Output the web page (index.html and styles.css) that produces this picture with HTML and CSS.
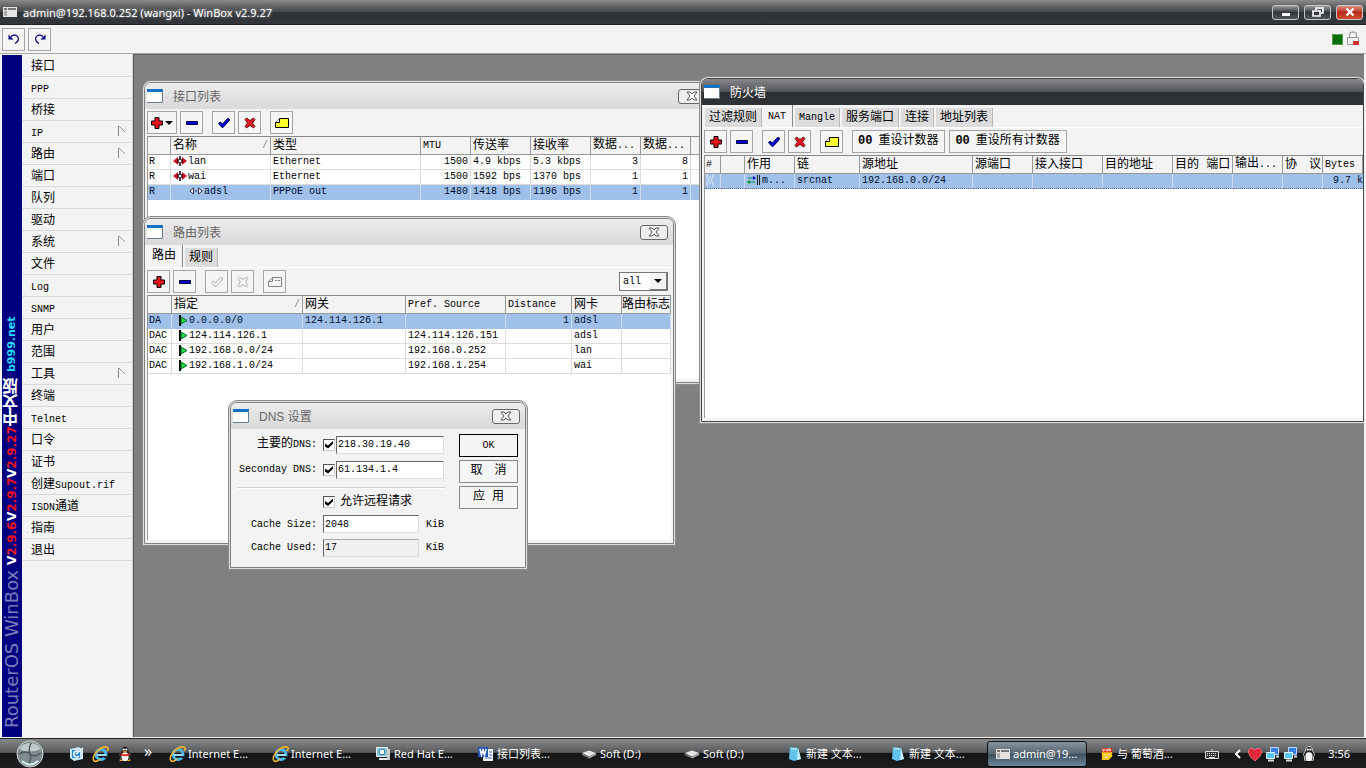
FILE: index.html
```html
<!DOCTYPE html>
<html lang="zh-CN">
<head>
<meta charset="utf-8">
<title>admin@192.168.0.252 (wangxi) - WinBox v2.9.27</title>
<link rel="stylesheet" href="styles.css">
</head>
<body>
<svg class="defs" aria-hidden="true">
  <symbol id="plus" viewBox="0 0 12 12"><path d="M4 .5h4v3.5h3.5v4H8v3.500H4V8H.5V4H4z" fill="#e8141c" stroke="#000"/></symbol>
  <symbol id="minus" viewBox="0 0 12 12"><path d="M.5 4.500h11v3H.5z" fill="#0000d8" stroke="#00003c"/></symbol>
  <symbol id="check" viewBox="0 0 12 12"><path d="M.5 6.500 2 5l2.500 2L9.500 1.500 11.500 2 11 4 5 10.500H4z" fill="#0000e0" stroke="#000040"/></symbol>
  <symbol id="cross" viewBox="0 0 12 12"><path d="M1 2.500 2.500 1 6 3.500 9.500 1 11 2.500 8.500 6 11 9.500 9.500 11 6 8.500 2.500 11 1 9.500 3.500 6z" fill="#f01820" stroke="#300" stroke-width=".8"/></symbol>
  <symbol id="note" viewBox="0 0 14 12"><path d="M4.500 1.500h9v9H.5V5.500z" fill="#ffff30" stroke="#000"/><path d="M4.500 1.500v4h-4" fill="#fff" stroke="#000"/></symbol>
  <symbol id="checkoff" viewBox="0 0 12 12"><path d="M.5 6.500 2 5l2.500 2L9.500 1.500 11.500 2 11 4 5 10.500H4z" fill="#f8f8f8" stroke="#aaa"/></symbol>
  <symbol id="crossoff" viewBox="0 0 12 12"><path d="M1 2.500 2.500 1 6 3.500 9.500 1 11 2.500 8.500 6 11 9.500 9.500 11 6 8.500 2.500 11 1 9.500 3.500 6z" fill="#f8f8f8" stroke="#aaa"/></symbol>
  <symbol id="noteoff" viewBox="0 0 14 12"><path d="M4.500 1.500h9v9H.5V5.500zM4.500 1.500v4h-4M7 4.500h2M10 4.500h2" fill="none" stroke="#808080"/></symbol>
  <symbol id="wclose" viewBox="0 0 12 10"><path d="M1 1h3l2 2 2-2h3L8 5l3 4H8L6 7 4 9H1l3-4z" fill="#fff" stroke="#555"/></symbol>
  <symbol id="appwin" viewBox="0 0 16 14"><path d="M0 0h16v14H0z" fill="#fff"/><path d="M0 0h16v3H0z" fill="#1470c0"/><path d="M15.500 2v11.500H0" fill="none" stroke="#6a7c90"/></symbol>
  <symbol id="nic" viewBox="0 0 14 10"><path d="M0 5l5-4v8zM14 5 9 1v8z" fill="#d01028"/><path d="M5 3v4M9 3v4" stroke="#300" stroke-width="1.500"/><path d="M7 0v4M7 6v4" stroke="#000" stroke-width="1.500"/></symbol>
  <symbol id="ppp" viewBox="0 0 14 10"><path d="M.8 5 4.500 2v6zM13.200 5 9.500 2v6z" fill="#fff" stroke="#335"/><path d="M6 5h2" stroke="#335"/></symbol>
  <symbol id="flag" viewBox="0 0 9 11"><path d="M1 0v11" stroke="#000" stroke-width="2"/><path d="M2 2l6 3.500L2 9z" fill="#20e040" stroke="#063"/></symbol>
  <symbol id="ie" viewBox="0 0 18 18"><circle cx="9" cy="9.500" r="5" fill="none" stroke="#4ab8f0" stroke-width="3"/><path d="M5 10h9" stroke="#9cdcff" stroke-width="2"/><path d="M12 13h5v-2h-5z" fill="#202428"/><path d="M2 16C-1 11 8 1 15 2c2 1 1 3 0 4M2 16c2 1 5-1 6-2" fill="none" stroke="#f0b428" stroke-width="1.600"/></symbol>
  <symbol id="qq" viewBox="0 0 16 18"><path d="M3 12C0 9 4 7 4 5c0-6 8-6 8 0 0 2 4 4 1 7v4H3z" fill="#15171a" stroke="#777" stroke-width=".5"/><ellipse cx="8" cy="12" rx="4" ry="5" fill="#fff"/><path d="M3 8q5 3 10 0v2q-5 3-10 0z" fill="#e82020"/><circle cx="6.500" cy="4" r="1.300" fill="#fff"/><circle cx="9.500" cy="4" r="1.300" fill="#fff"/><path d="M5 6h6l-3 2zM2 15l5 2H2zM14 15l-5 2h5z" fill="#f8a818"/></symbol>
  <symbol id="disk" viewBox="0 0 18 12"><path d="M1 5l8-3 8 3-8 4z" fill="#e4e4e4"/><path d="M1 5l8 4v2L1 7z" fill="#777"/><path d="M17 5 9 9v2l8-4z" fill="#aaa"/></symbol>
  <symbol id="pad" viewBox="0 0 14 16"><path d="M2 1l8 1 3 11-7 2-5-2z" fill="#62c4ee"/><path d="M10 2l3 11-4 1z" fill="#c8eefc"/><path d="M3 3h6" stroke="#d8f6ff"/></symbol>
  <symbol id="net" viewBox="0 0 16 16"><path d="M5.500 1.500h8v7h-8z" fill="#3a80e0" stroke="#bcd8ff"/><path d="M1.500 6.500h8v6h-8z" fill="#54c8ff" stroke="#e6f5ff"/><path d="M3 14.500h6M11 10.500h3" stroke="#ddd" stroke-width="2"/></symbol>
  <symbol id="wbx" viewBox="0 0 14 10"><path d="M0 0h14v10H0z" fill="#e4e4e4"/><path d="M1 1h3v2H1zM5 1h8v2H5z" fill="#777"/><path d="M1 4h3v5H1z" fill="#aaa"/></symbol>
</svg>

<header class="titlebar">
  <svg class="i14"><use href="#wbx"/></svg>
  <h1>admin@192.168.0.252 (wangxi) - WinBox v2.9.27</h1>
  <div class="winbtns">
    <button aria-label="最小化"><svg viewBox="0 0 12 10"><path d="M2 6h8v3H2z" fill="#fff"/></svg></button>
    <button aria-label="还原"><svg viewBox="0 0 12 10"><path d="M4 3V1h7v5H9M1 4h7v5H1z" fill="none" stroke="#fff" stroke-width="1.600"/></svg></button>
    <button class="red" aria-label="关闭"><svg viewBox="0 0 12 10"><path d="M2.500 1.500l7 7M9.500 1.500l-7 7" stroke="#fff" stroke-width="2.400"/></svg></button>
  </div>
</header>

<div class="mainbar">
  <button class="tb" aria-label="撤销"><svg class="i12" viewBox="0 0 12 12"><path d="M3 3.500C9-1 14 7 7 10.500" fill="none" stroke="#000080" stroke-width="1.200"/><path d="M.5 1.500v5h5z" fill="#000080"/></svg></button>
  <button class="tb" aria-label="重做"><svg class="i12" viewBox="0 0 12 12"><path d="M9 3.500C3-1-2 7 5 10.500" fill="none" stroke="#000080" stroke-width="1.200"/><path d="M11.500 1.500v5h-5z" fill="#000080"/></svg></button>
  <span class="led"></span>
  <svg class="lock" viewBox="0 0 14 16"><path d="M3.500 7V4c0-4 7-4 7 0v3" fill="none" stroke="#aaa" stroke-width="1.500"/><path d="M1.500 6.500h11v7h-11z" fill="#eee" stroke="#999"/><path d="M7 10h6v4H7z" fill="#d03030"/></svg>
</div>

<div class="main">
  <div class="strip"><div class="brand"><span class="b1">RouterOS WinBox</span><span class="b2">V<i>2.9.6</i></span><span class="b2">V<i>2.9.7</i></span><span class="b2">V<i>2.9.27</i></span><span class="b3">中文版</span><span class="b4">b999.net</span></div></div>
  <nav class="menu">
    <a href="#">接口</a><a href="#"><b>PPP</b></a><a href="#">桥接</a><a href="#" class="sub"><b>IP</b></a><a href="#" class="sub">路由</a><a href="#">端口</a><a href="#">队列</a><a href="#">驱动</a><a href="#" class="sub">系统</a><a href="#">文件</a><a href="#"><b>Log</b></a><a href="#"><b>SNMP</b></a><a href="#">用户</a><a href="#">范围</a><a href="#" class="sub">工具</a><a href="#">终端</a><a href="#"><b>Telnet</b></a><a href="#">口令</a><a href="#">证书</a><a href="#">创建<b>Supout.rif</b></a><a href="#"><b>ISDN</b>通道</a><a href="#">指南</a><a href="#">退出</a>
  </nav>

  <main class="desk">
    <section class="win w1">
      <header class="wt"><svg class="i16"><use href="#appwin"/></svg><h2>接口列表</h2><button class="x" aria-label="关闭"><svg><use href="#wclose"/></svg></button></header>
      <div class="bar">
        <button class="tb wide" aria-label="添加"><svg class="i12"><use href="#plus"/></svg><span class="dn"></span></button>
        <button class="tb" aria-label="删除"><svg class="i12"><use href="#minus"/></svg></button>
        <button class="tb gap" aria-label="启用"><svg class="i12"><use href="#check"/></svg></button>
        <button class="tb" aria-label="禁用"><svg class="i12"><use href="#cross"/></svg></button>
        <button class="tb gap" aria-label="注释"><svg class="i14"><use href="#note"/></svg></button>
      </div>
      <div class="list"><table>
        <colgroup><col class="c23"><col class="c100"><col class="c150"><col class="c50"><col class="c60"><col class="c60"><col class="c50"><col class="c50"><col></colgroup>
        <thead><tr><th></th><th class="sort">名称</th><th>类型</th><th><b>MTU</b></th><th>传送率</th><th>接收率</th><th>数据<b>...</b></th><th>数据<b>...</b></th><th></th></tr></thead>
        <tbody>
          <tr><td>R</td><td><svg class="nic"><use href="#nic"/></svg>lan</td><td>Ethernet</td><td class="r">1500</td><td>4.9 kbps</td><td>5.3 kbps</td><td class="r">3</td><td class="r">8</td><td></td></tr>
          <tr><td>R</td><td><svg class="nic"><use href="#nic"/></svg>wai</td><td>Ethernet</td><td class="r">1500</td><td>1592 bps</td><td>1370 bps</td><td class="r">1</td><td class="r">1</td><td></td></tr>
          <tr class="sel"><td>R</td><td class="child"><svg class="nic"><use href="#ppp"/></svg>adsl</td><td>PPPoE out</td><td class="r">1480</td><td>1418 bps</td><td>1196 bps</td><td class="r">1</td><td class="r">1</td><td></td></tr>
        </tbody>
      </table></div>
    </section>

    <section class="win w2">
      <header class="wt"><svg class="i16"><use href="#appwin"/></svg><h2>路由列表</h2><button class="x" aria-label="关闭"><svg><use href="#wclose"/></svg></button></header>
      <div class="tabs"><button class="on">路由</button><button>规则</button></div>
      <div class="bar">
        <button class="tb" aria-label="添加"><svg class="i12"><use href="#plus"/></svg></button>
        <button class="tb" aria-label="删除"><svg class="i12"><use href="#minus"/></svg></button>
        <button class="tb gap" disabled aria-label="启用"><svg class="i12"><use href="#checkoff"/></svg></button>
        <button class="tb" disabled aria-label="禁用"><svg class="i12"><use href="#crossoff"/></svg></button>
        <button class="tb gap" disabled aria-label="注释"><svg class="i14"><use href="#noteoff"/></svg></button>
        <label class="pick"><select aria-label="筛选"><option>all</option></select><span class="arrow"><span class="dn"></span></span></label>
      </div>
      <div class="list"><table>
        <colgroup><col class="c24"><col class="c131"><col class="c103"><col class="c100"><col class="c66"><col class="c50"><col></colgroup>
        <thead><tr><th></th><th class="sort">指定</th><th>网关</th><th><b>Pref. Source</b></th><th><b>Distance</b></th><th>网卡</th><th class="tight">路由标志</th></tr></thead>
        <tbody>
          <tr class="sel"><td>DA</td><td class="dst"><svg class="flag"><use href="#flag"/></svg>0.0.0.0/0</td><td>124.114.126.1</td><td></td><td class="r">1</td><td>adsl</td><td></td></tr>
          <tr><td>DAC</td><td class="dst"><svg class="flag"><use href="#flag"/></svg>124.114.126.1</td><td></td><td>124.114.126.151</td><td></td><td>adsl</td><td></td></tr>
          <tr><td>DAC</td><td class="dst"><svg class="flag"><use href="#flag"/></svg>192.168.0.0/24</td><td></td><td>192.168.0.252</td><td></td><td>lan</td><td></td></tr>
          <tr><td>DAC</td><td class="dst"><svg class="flag"><use href="#flag"/></svg>192.168.1.0/24</td><td></td><td>192.168.1.254</td><td></td><td>wai</td><td></td></tr>
        </tbody>
      </table></div>
    </section>

    <section class="win w3">
      <header class="wt"><svg class="i16"><use href="#appwin"/></svg><h2>DNS 设置</h2><button class="x" aria-label="关闭"><svg><use href="#wclose"/></svg></button></header>
      <form class="dns">
        <div class="fields">
          <div class="row"><label for="d1">主要的<b>DNS:</b></label><input type="checkbox" checked aria-label="启用主要的DNS"><input class="tx" id="d1" value="218.30.19.40"></div>
          <div class="row"><label for="d2"><b>Seconday DNS:</b></label><input type="checkbox" checked aria-label="启用 Seconday DNS"><input class="tx" id="d2" value="61.134.1.4"></div>
          <hr>
          <div class="row low"><span class="lead"></span><input type="checkbox" id="rem" checked><label class="after" for="rem">允许远程请求</label></div>
          <div class="row low"><label for="cs"><b>Cache Size:</b></label><input class="tx short" id="cs" value="2048"><b>KiB</b></div>
          <div class="row"><label for="cu"><b>Cache Used:</b></label><input class="tx short ro" id="cu" value="17" readonly><b>KiB</b></div>
        </div>
        <div class="acts"><button type="button" class="def"><b>OK</b></button><button type="button">取　消</button><button type="button">应 用</button></div>
      </form>
    </section>

    <section class="win w4">
      <header class="wt dark"><svg class="i16"><use href="#appwin"/></svg><h2>防火墙</h2></header>
      <div class="tabs"><button>过滤规则</button><button class="on"><b>NAT</b></button><button><b>Mangle</b></button><button>服务端口</button><button>连接</button><button>地址列表</button></div>
      <div class="bar">
        <button class="tb" aria-label="添加"><svg class="i12"><use href="#plus"/></svg></button>
        <button class="tb" aria-label="删除"><svg class="i12"><use href="#minus"/></svg></button>
        <button class="tb gap" aria-label="启用"><svg class="i12"><use href="#check"/></svg></button>
        <button class="tb" aria-label="禁用"><svg class="i12"><use href="#cross"/></svg></button>
        <button class="tb gap" aria-label="注释"><svg class="i14"><use href="#note"/></svg></button>
        <button class="tb txt gap"><strong>00</strong>重设计数器</button>
        <button class="tb txt"><strong>00</strong>重设所有计数器</button>
      </div>
      <div class="list"><table>
        <colgroup><col class="c16"><col class="c24"><col class="c50"><col class="c65"><col class="c113"><col class="c60"><col class="c70"><col class="c70"><col class="c60"><col class="c50"><col class="c40"><col></colgroup>
        <thead><tr><th><b>#</b></th><th></th><th>作用</th><th>链</th><th>源地址</th><th>源端口</th><th>接入接口</th><th>目的地址</th><th>目的 端口</th><th>输出<b>...</b></th><th>协　议</th><th><b>Bytes</b></th></tr></thead>
        <tbody><tr class="sel foc"><td><svg class="hand" viewBox="0 0 8 12"><path d="M1 0v3l2 3-2 3v3M7 0v3L5 6l2 3v3M3 3h2M3 9h2" fill="none" stroke="#e4ecf8"/></svg></td><td></td><td><svg class="nic" viewBox="0 0 14 10"><path d="M1 3h7M1 7h7" stroke="#086"/><path d="M6 1l3 2-3 2z" fill="#00c"/><path d="M3 5 0 7l3 2z" fill="#090"/><path d="M10.500 0v10M12.500 0v10" stroke="#223"/></svg>m...</td><td>srcnat</td><td>192.168.0.0/24</td><td></td><td></td><td></td><td></td><td></td><td></td><td class="last">9.7 k</td></tr></tbody>
      </table></div>
    </section>
  </main>
</div>

<footer class="task">
  <button class="orb" aria-label="开始"><svg viewBox="0 0 28 28"><circle cx="14" cy="14" r="13" fill="#7f8b8f" stroke="#cdd5d7"/><path d="M3 9a13 13 0 0 1 22 0q-11 5-22 0z" fill="#c0cacc"/><path d="M3 14q6-4 11 0t11-1M15 3q-3 6-1 11t-2 11" fill="none" stroke="#4b585c" stroke-width="1.500"/><path d="M6 21q8 7 16 0" fill="none" stroke="#d4f0f2" stroke-width="2"/></svg></button>
  <div class="quick">
    <svg class="i16" viewBox="0 0 16 16"><path d="M1 3l9-2 4 3v9l-9 2-4-3z" fill="#c8e8fa"/><path d="M3 4h8v8H3z" fill="#2a88d0"/><path d="M10 6a3 3 0 1 0 0 4M7 8l7-6" fill="none" stroke="#fff" stroke-width="1.500"/></svg>
    <svg class="i18"><use href="#ie"/></svg>
    <svg class="i16"><use href="#qq"/></svg>
    <span class="more">»</span>
  </div>
  <div class="apps">
    <button class="wideicon"><svg class="i18"><use href="#ie"/></svg>Internet E...</button>
    <button class="wideicon"><svg class="i18"><use href="#ie"/></svg>Internet E...</button>
    <button><svg class="i16" viewBox="0 0 16 16"><path d="M1.500 1.500h11v9h-11z" fill="#8fc8e0" stroke="#e4f2f6"/><circle cx="7" cy="6" r="3" fill="#fff" stroke="#167a9a"/><path d="M4 13h8" stroke="#eee" stroke-width="2"/><path d="M13.500 3v11" stroke="#ccc" stroke-width="3"/></svg>Red Hat E...</button>
    <button><svg class="i16" viewBox="0 0 16 16"><path d="M5 3h10v12H5z" fill="#eef4ff"/><path d="M7 12h7M11 6h3M11 9h3" stroke="#4870c0"/><path d="M0 1h10v10H0z" fill="#2458b0"/><path d="M2 3l1.500 6L5 4l1.500 5L8 3" fill="none" stroke="#fff" stroke-width="1.500"/></svg>接口列表...</button>
    <button><svg class="i16"><use href="#disk"/></svg>Soft (D:)</button>
    <button><svg class="i16"><use href="#disk"/></svg>Soft (D:)</button>
    <button><svg class="i16"><use href="#pad"/></svg>新建 文本...</button>
    <button><svg class="i16"><use href="#pad"/></svg>新建 文本...</button>
    <button class="act"><svg class="i14"><use href="#wbx"/></svg>admin@19...</button>
    <button><svg class="i14" viewBox="0 0 14 14"><path d="M1 1h12v9l-4 4H1z" fill="#f8c820"/><path d="M1 0h12v5H1z" fill="#d83010"/><path d="M2 1l1 3 1-3M6 1v3M8 4V1h3v2H8M3 8h2M8 8h2M4 11h4" fill="none" stroke="#fff"/></svg>与 葡萄酒...</button>
  </div>
  <div class="tray">
    <svg class="kbd" viewBox="0 0 14 10"><path d="M.5 2.500h13v7H.5z" fill="#333" stroke="#ddd"/><path d="M2 4.500h10M2 6.500h10" stroke="#eee" stroke-dasharray="1 1"/><path d="M4 8.500h6" stroke="#eee"/><path d="M7 0v2" stroke="#ddd"/></svg>
    <svg class="chev" viewBox="0 0 8 10"><path d="M6 1 2 5l4 4" fill="none" stroke="#fff" stroke-width="2"/></svg>
    <svg class="i16" viewBox="0 0 16 16"><path d="M8 15C-4 6 3-1 8 4c5-5 12 2 0 11z" fill="#e02838" stroke="#ff9aa0" stroke-width=".6"/></svg>
    <svg class="i16"><use href="#net"/></svg>
    <svg class="i16"><use href="#net"/></svg>
    <svg class="i16" viewBox="0 0 16 18"><path d="M3 12C0 9 4 7 4 5c0-6 8-6 8 0 0 2 4 4 1 7v4H3z" fill="#222" stroke="#ddd"/><ellipse cx="8" cy="12" rx="4" ry="5" fill="#f4f4f4"/><circle cx="6.500" cy="4" r="1.300" fill="#fff"/><circle cx="9.500" cy="4" r="1.300" fill="#fff"/><path d="M5 7h6l-3 1z" fill="#ccc"/></svg>
    <time>3:56</time>
  </div>
</footer>
</body>
</html>
```
FILE: styles.css
```css
* { box-sizing: border-box; }
body {
  margin: 0;
  height: 100vh;
  display: flex;
  flex-direction: column;
  overflow: hidden;
  background: #f3f3f3;
  color: #000;
  font: 12px/15px "Liberation Mono", "Noto Sans CJK SC", monospace;
}
b { font-weight: 400; font-size: 10px; }
h1, h2 { margin: 0; font-weight: 400; }
button, input, select {
  margin: 0;
  padding: 0;
  font: inherit;
  color: inherit;
  border-radius: 0;
}
svg { flex: none; display: block; }
.defs { position: absolute; width: 0; height: 0; }
.i12 { width: 12px; height: 12px; }
.i14 { width: 14px; height: 12px; }
.i16 { width: 16px; height: 16px; }
.i18 { width: 18px; height: 18px; }

/* application title */
.titlebar {
  flex: none;
  height: 25px;
  display: flex;
  align-items: center;
  gap: 5px;
  padding: 0 3px;
  background: linear-gradient(#8a8a8a 0, #5c5e60 30%, #44474a 50%, #2f3236 52%, #33363a 100%);
  border-bottom: 1px solid #222;
}
.titlebar h1 {
  flex: 1;
  color: #fff;
  font: 11px/16px "Noto Sans", sans-serif;
  padding: 2px 0 0 1px;
  text-shadow: 0 0 3px #bbb;
}
.winbtns { display: flex; gap: 5px; }
.winbtns button {
  width: 27px;
  height: 15px;
  display: grid;
  place-items: center;
  border: 1px solid #c4c8cc;
  border-radius: 3px;
  background: linear-gradient(#9a9ea2, #34383c 50%, #50565c);
}
.winbtns .red { background: linear-gradient(#e09080, #b82c18 50%, #d05030); }
.winbtns svg { width: 12px; height: 10px; }

/* main toolbar */
.mainbar {
  flex: none;
  height: 29px;
  display: flex;
  align-items: center;
  gap: 3px;
  padding: 0 6px 0 2px;
  border-bottom: 1px solid #a8a8a8;
}
.tb {
  flex: none;
  width: 23px;
  height: 23px;
  display: flex;
  align-items: center;
  justify-content: center;
  background: #f5f5f5;
  border: 1px solid #a4a4a4;
}
.led { width: 11px; height: 11px; margin-left: auto; background: #087008; border: 1px solid #5a9a50; }
.lock { width: 14px; height: 16px; }

.main { flex: 1; min-height: 0; display: flex; padding: 1px 2px 0; border-bottom: 1px solid #f3f3f3; }
.strip { width: 20px; background: #000080; overflow: hidden; }
.brand {
  width: 20px;
  height: 100%;
  display: flex;
  align-items: center;
  writing-mode: vertical-rl;
  transform: rotate(180deg);
  padding-top: 9px;
  white-space: nowrap;
  color: #fff;
  font: bold 12px/20px "DejaVu Sans", "Noto Sans CJK SC", sans-serif;
}
.brand i { font-style: normal; color: #f01020; }
.b1 { font-weight: 400; font-size: 18px; color: #7c7cb8; margin-bottom: 5px; }
.b3 { font-size: 16px; }
.b4 { font-size: 11px; color: #28d8f8; margin-top: 6px; }

.menu { width: 111px; display: flex; flex-direction: column; border-right: 1px solid #d0d0d0; }
.menu a {
  position: relative;
  height: 22px;
  margin-right: 1px;
  padding-left: 9px;
  line-height: 25px;
  color: #000;
  text-decoration: none;
  border-bottom: 1px solid #d8d8d8;
  white-space: nowrap;
}
.sub::after {
  content: "";
  position: absolute;
  right: 6px;
  top: 5px;
  width: 6px;
  height: 10px;
  background: linear-gradient(45deg, transparent 46%, #999 47%, #999 56%, transparent 57%) 0 0 / 6px 6px no-repeat;
  border-left: 1px solid #888;
}

/* desktop with free windows */
.desk {
  position: relative;
  flex: 1;
  min-width: 0;
  margin-top: -1px;
  overflow: hidden;
  background: #808080;
  border-top: 1px solid #5c5c5c;
  border-left: 1px solid #5c5c5c;
}
.win {
  position: absolute;
  display: flex;
  flex-direction: column;
  background: #f3f3f3;
  border: 1px solid #808080;
  border-radius: 7px 7px 0 0;
  box-shadow: 0 0 0 1px #dcdcdc, 0 0 0 2px #8a8a8a;
  padding: 0 2px 3px;
}
.w1 { left: 10px; top: 27px; width: 600px; height: 301px; }
.w2 { left: 10px; top: 163px; width: 530px; height: 326px; }
.w3 { left: 96px; top: 347px; width: 296px; padding-bottom: 0; }
.w4 { left: 567px; top: 23px; right: 0; height: 344px; padding-right: 0; border-color: #404448; }
.wt {
  flex: none;
  height: 26px;
  display: flex;
  align-items: center;
  gap: 10px;
  margin: 0 -2px;
  padding: 0 5px 0 2px;
  background: linear-gradient(#eee, #e2e2e2 45%, #dadada);
  border-radius: 6px 6px 0 0;
  color: #666;
}
.wt .i16 { height: 14px; }
.wt h2 { flex: 1; padding-top: 1px; font: 12px/16px "Liberation Sans", "Noto Sans CJK SC", sans-serif; }
.wt.dark {
  margin-right: 0;
  color: #fff;
  background: linear-gradient(#85878a, #54575a 48%, #2e3134 50%, #303336);
}
.x {
  width: 28px;
  height: 15px;
  display: grid;
  place-items: center;
  background: #eee;
  border: 1px solid #666;
  border-radius: 3px;
}
.x svg { width: 12px; height: 10px; }
.w1 .x { margin-right: 32px; }

.bar { flex: none; height: 27px; display: flex; align-items: center; gap: 3px; }
.bar .gap { margin-left: 6px; }
.tb.wide { width: 30px; gap: 2px; }
.dn { border: 4px solid transparent; border-top-color: #000; border-bottom: 0; }
.tb.txt { width: auto; padding: 0 6px 0 5px; gap: 6px; margin-right: 1px; }
.tb strong { font-size: 12px; }

.tabs {
  flex: none;
  height: 23px;
  display: flex;
  align-items: flex-end;
  gap: 2px;
  padding: 0 0 0 1px;
  border-bottom: 1px solid #fff;
}
.tabs button {
  height: 19px;
  padding: 0 4px;
  line-height: 18px;
  border: 0;
  border-right: 1px solid #b8b8b8;
  background: #dcdcdc;
}
.tabs .on { height: 22px; padding: 0 6px 0 4px; background: #f3f3f3; border-right-color: #888; }

.pick { margin-left: auto; margin-right: 3px; width: 49px; height: 19px; display: flex; border: 1px solid #777; background: #fff; }
.pick select { appearance: none; flex: 1; min-width: 0; padding-left: 3px; border: 0; background: #fff; font-size: 10px; }
.arrow { width: 17px; display: grid; place-items: center; background: #f3f3f3; border-right: 1px solid #777; border-bottom: 1px solid #777; }

.list { flex: 1; min-height: 0; overflow: hidden; background: #fff; border-top: 1px solid #888; border-left: 1px solid #999; }
table { width: 100%; table-layout: fixed; border-collapse: separate; border-spacing: 0; }
th, td { padding: 0 0 0 2px; overflow: hidden; white-space: nowrap; text-align: left; font-weight: 400; }
th { height: 17px; line-height: 16px; background: #f3f3f3; border-right: 1px solid #999; border-bottom: 1px solid #999; }
td { height: 15px; line-height: 14px; font-size: 10px; border-right: 1px solid #dcdcdc; border-bottom: 1px solid #dcdcdc; }
th:first-child, td:first-child { padding-left: 1px; }
th.tight { padding-left: 0; }
.sort::after { content: "/"; float: right; margin-right: 2px; font-size: 10px; color: #888; }
.r { text-align: right; padding-right: 2px; }
.sel td { background: #9fc0e8; border-bottom-color: #9fc0e8; border-right-color: #cfdff3; color: #001030; }
.foc td { border-bottom: 1px dotted #667; }
td.last { padding-left: 10px; border-right: 0; }
td svg { display: inline-block; vertical-align: middle; margin-right: 1px; }
.nic { width: 14px; height: 10px; }
.flag { width: 9px; height: 11px; }
.hand { width: 8px; height: 12px; }
td.child { padding-left: 18px; }
td.dst { padding-left: 7px; }
.c16 { width: 16px; } .c23 { width: 23px; } .c24 { width: 24px; } .c40 { width: 40px; } .c50 { width: 50px; }
.c60 { width: 60px; } .c65 { width: 65px; } .c66 { width: 66px; } .c70 { width: 70px; }
.c100 { width: 100px; } .c103 { width: 103px; } .c113 { width: 113px; } .c131 { width: 131px; } .c150 { width: 150px; }

/* DNS dialog */
.dns { display: flex; justify-content: space-between; padding: 3px 5px 7px 4px; }
.fields { width: 208px; }
.row { height: 25px; display: flex; align-items: center; white-space: nowrap; }
.row.low { height: 22px; }
.row label:first-child, .lead { width: 80px; margin-right: 6px; text-align: right; }
.row label:first-child { display: flex; justify-content: flex-end; align-items: center; }
.row .after { padding-left: 5px; }
.row input[type="checkbox"] {
  appearance: none;
  flex: none;
  width: 12px;
  height: 12px;
  display: grid;
  place-items: center;
  background: #fff;
  border: 1px solid #ccc;
  border-top-color: #555;
  border-left-color: #555;
}
.row input[type="checkbox"]:checked::after {
  content: "";
  width: 8px;
  height: 8px;
  background: #000;
  clip-path: polygon(0 38%, 38% 62%, 100% 5%, 100% 42%, 38% 100%, 0 75%);
}
.tx {
  width: 108px;
  height: 18px;
  margin-left: 1px;
  padding-left: 1px;
  font-size: 10px;
  background: #fff;
  border: 1px solid #ddd;
  border-top-color: #666;
  border-left-color: #666;
}
.row .short { width: 96px; margin: 0 7px 0 0; }
.tx.ro { background: #f0f0f0; border-top-color: #aaa; }
hr { margin: 5px 0 2px; border: 0; border-top: 1px solid #d0d0d0; border-bottom: 1px solid #fff; }
.acts { display: flex; flex-direction: column; gap: 3px; padding-top: 2px; }
.acts button { width: 59px; height: 23px; background: #f5f5f5; border: 1px solid #888; }
.acts .def { border-color: #000; }

/* taskbar */
.task {
  flex: none;
  height: 30px;
  display: flex;
  align-items: center;
  color: #fff;
  font: 11px/16px "Noto Sans", "Noto Sans CJK SC", sans-serif;
  border-top: 1px solid #222;
  background: linear-gradient(#868889, #57595a 46%, #141617 50%, #1c1e1f);
  padding: 0 16px;
}
.task button { border: 0; background: none; }
.orb { width: 28px; height: 28px; }
.quick { display: flex; align-items: center; gap: 7px; margin-left: 25px; width: 94px; }
.more { font-size: 16px; line-height: 12px; padding: 0 0 6px 4px; }
.apps { flex: 1; display: flex; }
.apps button {
  flex: 0 1 103px;
  min-width: 0;
  height: 26px;
  display: flex;
  align-items: center;
  gap: 3px;
  padding: 0 0 0 6px;
  white-space: nowrap;
}
.apps .wideicon { gap: 1px; }
.apps .act { padding-left: 8px; border: 1px solid #111; border-radius: 3px; background: linear-gradient(#87939d, #566672 48%, #3f515e 52%, #6f8799); margin-right: 7px; flex-basis: 100px; }
.tray { display: flex; align-items: center; gap: 2px; }
.kbd { width: 14px; height: 12px; margin-right: 13px; }
.chev { width: 8px; height: 10px; margin-right: 3px; }
.tray time { margin-left: 9px; }
```
